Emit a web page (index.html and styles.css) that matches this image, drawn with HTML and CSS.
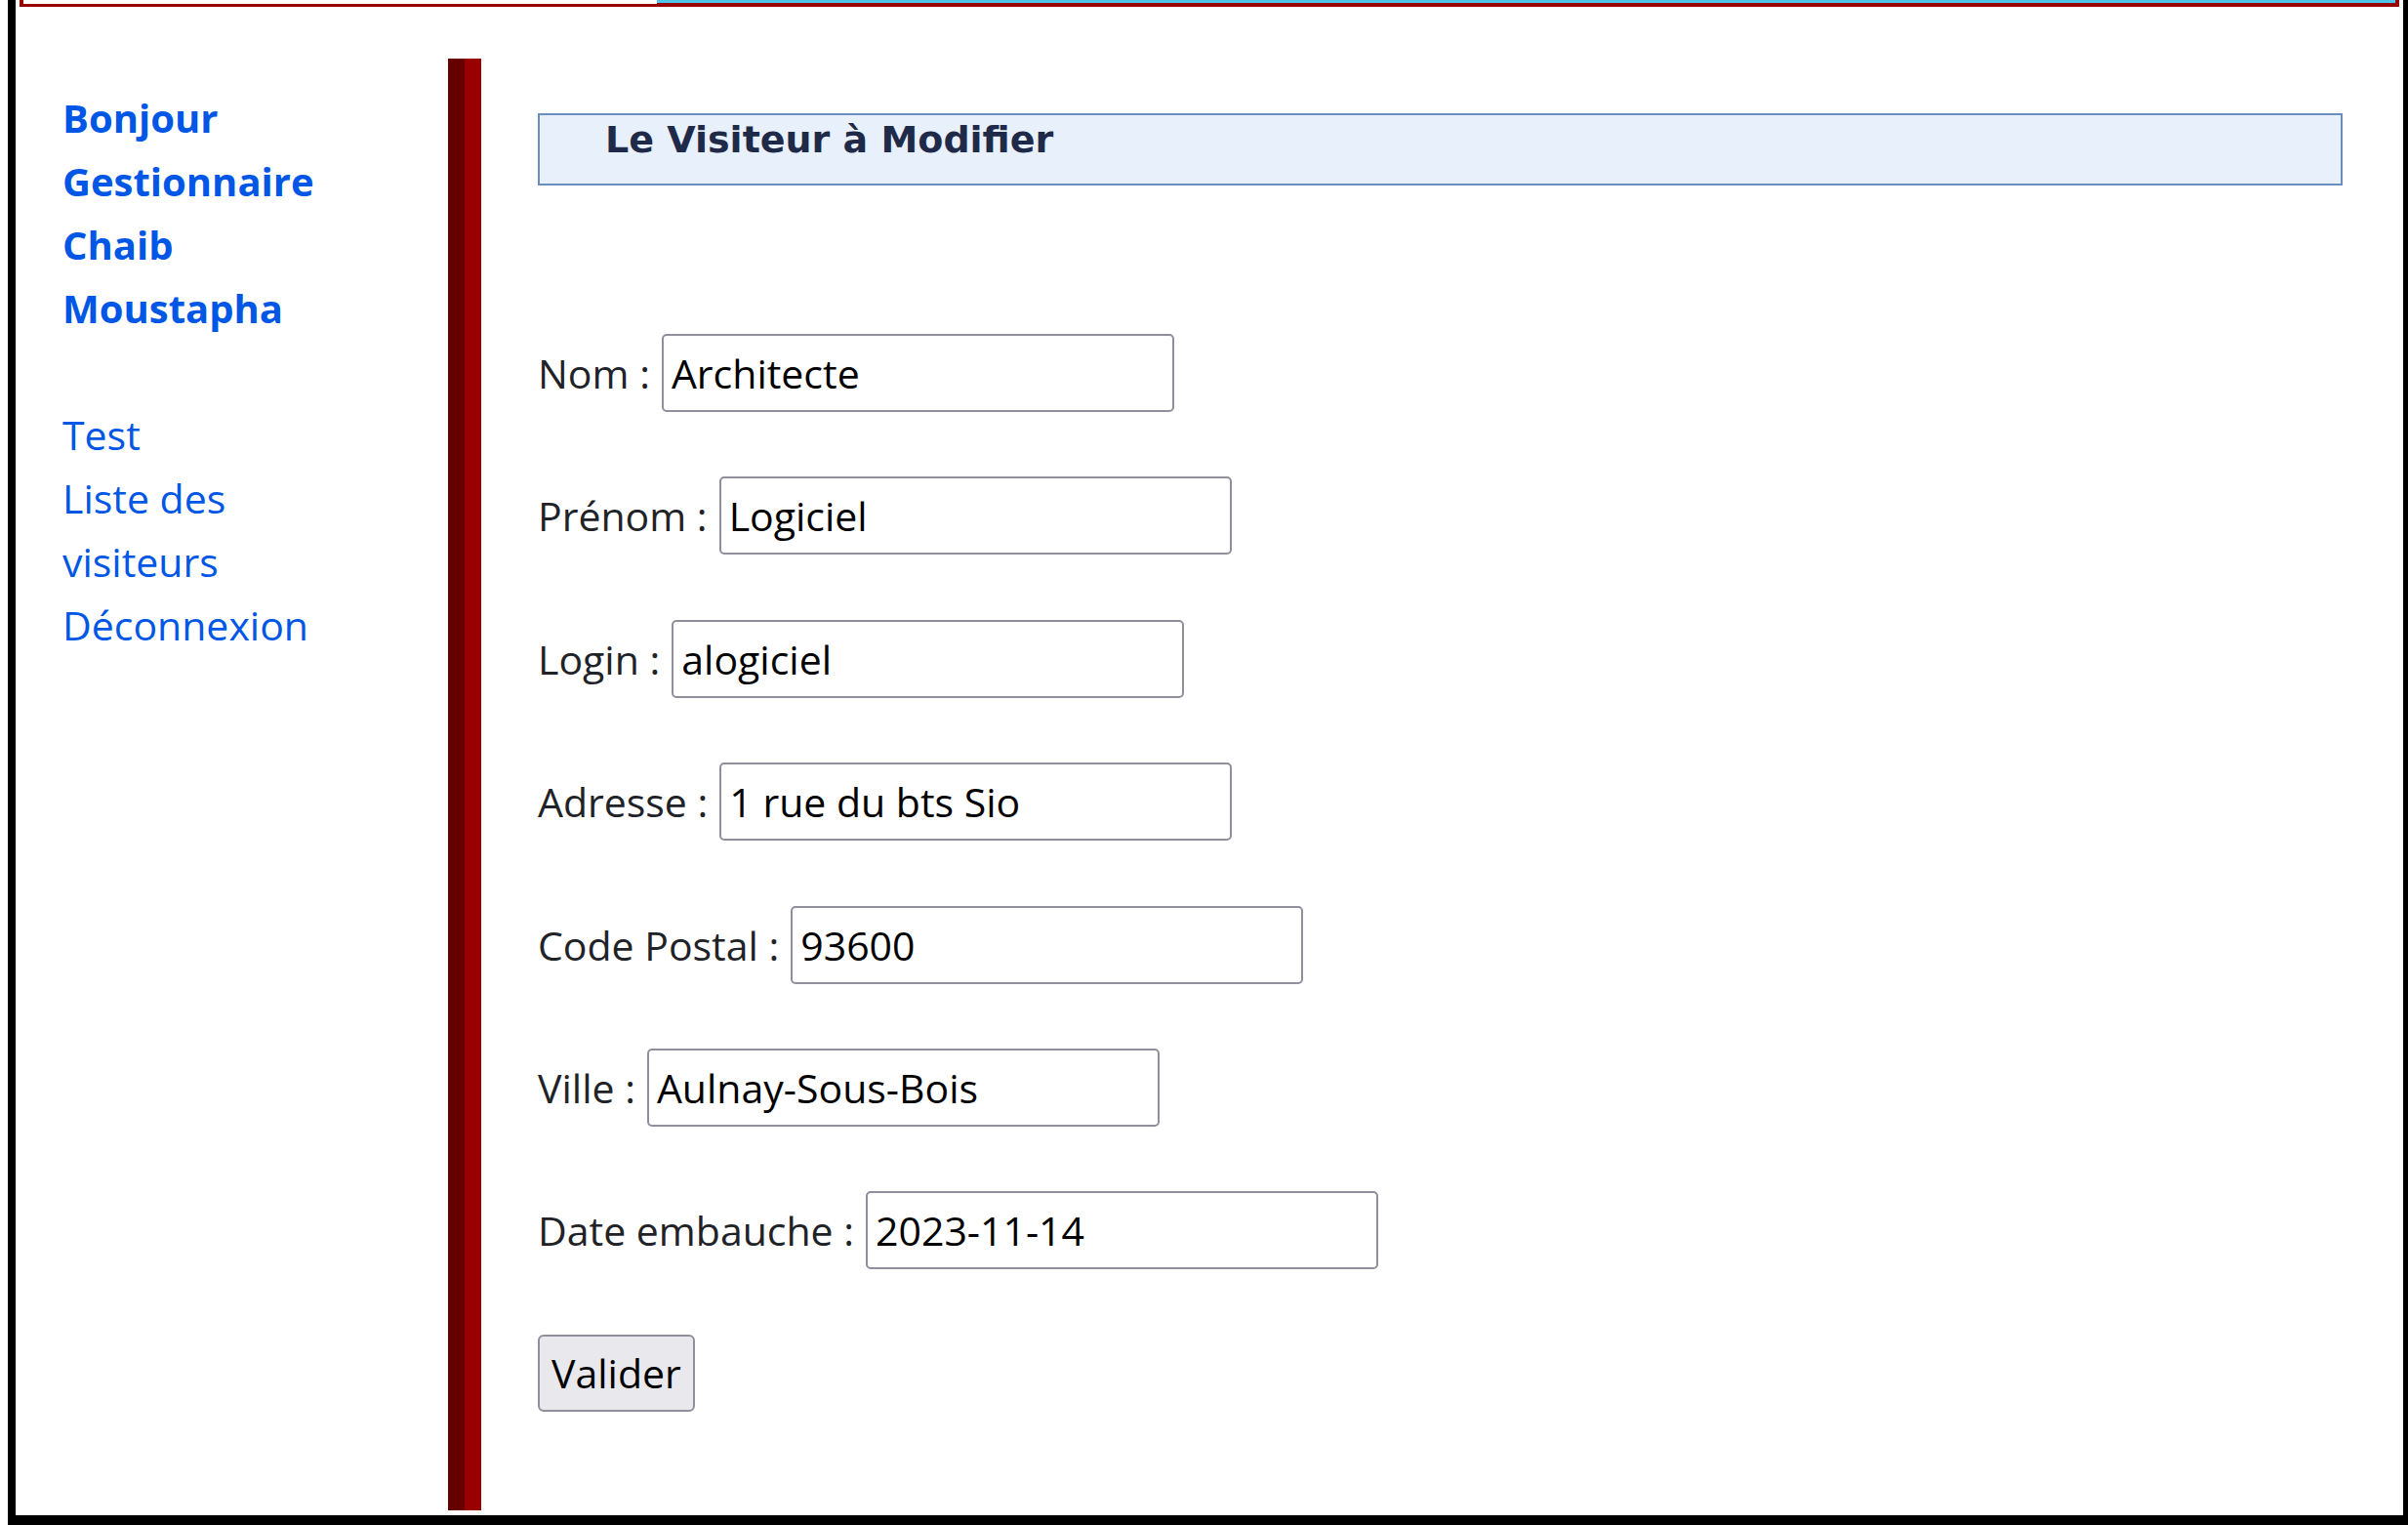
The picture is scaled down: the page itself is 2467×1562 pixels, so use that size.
FILE: index.html
```html
<!DOCTYPE html>
<html lang="fr">
<head>
<meta charset="utf-8">
<title>Modifier un visiteur</title>
<link rel="stylesheet" href="styles.css">
</head>
<body>
<div class="frame">
  <header class="topbar"><div class="topbar-logo"></div></header>
  <div class="main">
    <nav class="side">
      <div class="side-inner">
        <strong class="hello">Bonjour Gestionnaire Chaib Moustapha</strong>
        <ul class="menu">
          <li><a href="#">Test</a></li>
          <li><a href="#">Liste des visiteurs</a></li>
          <li><a href="#">Déconnexion</a></li>
        </ul>
      </div>
    </nav>
    <div class="divider"></div>
    <section class="content">
      <h2 class="title">Le Visiteur à Modifier</h2>
      <form class="form">
        <div class="row"><label for="nom">Nom :</label><input id="nom" type="text" value="Architecte"></div>
        <div class="row"><label for="prenom">Prénom :</label><input id="prenom" type="text" value="Logiciel"></div>
        <div class="row"><label for="login">Login :</label><input id="login" type="text" value="alogiciel"></div>
        <div class="row"><label for="adresse">Adresse :</label><input id="adresse" type="text" value="1 rue du bts Sio"></div>
        <div class="row"><label for="cp">Code Postal :</label><input id="cp" type="text" value="93600"></div>
        <div class="row"><label for="ville">Ville :</label><input id="ville" type="text" value="Aulnay-Sous-Bois"></div>
        <div class="row"><label for="date">Date embauche :</label><input id="date" type="text" value="2023-11-14"></div>
        <div class="row"><button type="button" class="btn">Valider</button></div>
      </form>
    </section>
  </div>
</div>
</body>
</html>
```

FILE: styles.css
```css
html, body {
  margin: 0;
  padding: 0;
  background: #ffffff;
  overflow: hidden;
}

.frame {
  margin-left: 8px;
  height: 1562px;
  box-sizing: border-box;
  border-left: 8px solid #000000;
  border-right: 5px solid #000000;
  border-bottom: 10px solid #000000;
  display: flex;
  flex-direction: column;
  background: #ffffff;
}

.topbar {
  display: flex;
  height: 3px;
  margin: 0 4px 0 4px;
  background: #4ec4e9;
  border-bottom: 4px solid #990000;
  border-right: 4px solid #990000;
}

.topbar-logo {
  width: 649px;
  height: 4px;
  background: #ffffff;
  border-left: 4px solid #990000;
}

.main {
  flex: 1;
  display: flex;
}

.side {
  width: 443px;
  flex: none;
  box-sizing: border-box;
  padding: 81px 0 0 48px;
}

.side-inner {
  width: 285px;
  font-family: "Open Sans", "Noto Sans", sans-serif;
  font-size: 40px;
  line-height: 65px;
  color: #0057e6;
}

.hello {
  display: block;
  font-weight: 700;
}

.menu {
  list-style: none;
  margin: 65px 0 0 0;
  padding: 0;
  font-size: 41px;
}

.menu a {
  color: inherit;
  text-decoration: none;
}

.divider {
  width: 34px;
  flex: none;
  margin: 53px 0 5px 0;
  background: linear-gradient(to right, #660000 50%, #990000 50%);
}

.content {
  flex: 1;
  padding: 109px 62px 0 58px;
}

.title {
  margin: 0;
  height: 74px;
  box-sizing: border-box;
  border: 2px solid #6c8ebf;
  background: #e8f0fc;
  padding: 3px 0 0 67px;
  font-family: "DejaVu Sans", Verdana, sans-serif;
  font-weight: 700;
  font-size: 38px;
  line-height: normal;
  color: #1e2a47;
}

.form {
  margin-top: 152px;
  display: flex;
  flex-direction: column;
  gap: 66.4px;
}

.row {
  display: flex;
  align-items: baseline;
  gap: 12px;
  height: 80px;
  font-family: "Open Sans", "Noto Sans", sans-serif;
  font-size: 41px;
  color: #1f2328;
}

.row input {
  width: 525px;
  height: 80px;
  box-sizing: border-box;
  border: 2px solid #8f8f9d;
  border-radius: 5px;
  padding: 0 8px;
  font-family: "Open Sans", "Noto Sans", sans-serif;
  font-size: 41px;
  color: #000000;
  background: #ffffff;
}

.btn {
  height: 79px;
  box-sizing: border-box;
  padding: 0 12px;
  border: 2px solid #8f8f9d;
  border-radius: 6px;
  background: #e9e9ed;
  font-family: "Open Sans", "Noto Sans", sans-serif;
  font-size: 41px;
  color: #000000;
}
```
